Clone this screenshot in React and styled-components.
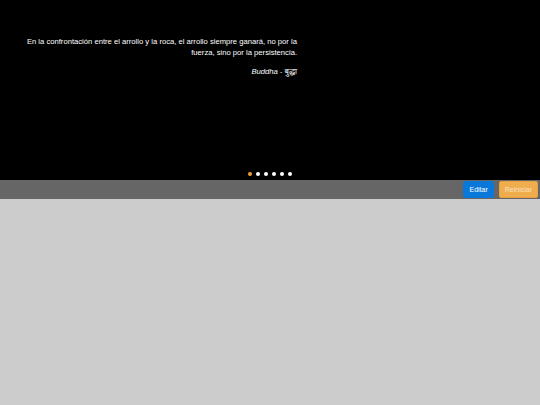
import React from 'react';
import styled, { createGlobalStyle } from 'styled-components';

const GlobalStyle = createGlobalStyle`
  html, body {
    margin: 0;
    padding: 0;
    height: 100%;
    background: #cccccc;
    font-family: "Liberation Sans", Arial, "Noto Sans", sans-serif;
  }
  #root {
    min-height: 100%;
  }
`;

const Page = styled.div`
  width: 540px;
  height: 405px;
  display: flex;
  flex-direction: column;
  background: #cccccc;
`;

const Stage = styled.div`
  height: 180px;
  background: #000;
  display: flex;
  flex-direction: column;
  justify-content: space-between;
  box-sizing: border-box;
  padding: 36px 0 4px 0;
`;

const Quote = styled.blockquote`
  margin: 0;
  width: 297px;
  box-sizing: border-box;
  padding-left: 20px;
  text-align: right;
  color: #fff;
  font-size: 7.65px;
  line-height: 11px;
`;

const Author = styled.p`
  margin: 8px 0 0 0;
  font-style: italic;
`;

const Dots = styled.div`
  display: flex;
  justify-content: center;
  gap: 3.5px;
  margin-left: 230px;
  width: 80px;
`;

const Dot = styled.span`
  width: 4.5px;
  height: 4.5px;
  border-radius: 50%;
  background: ${p => (p.$active ? '#f0a030' : '#ffffff')};
`;

const Toolbar = styled.div`
  height: 19px;
  background: #666666;
  display: flex;
  justify-content: flex-end;
  align-items: center;
  gap: 5px;
  padding-right: 2px;
`;

const Button = styled.button`
  height: 17px;
  border: 1px solid ${p => (p.$variant === 'warn' ? '#e8a040' : '#0a78d8')};
  border-radius: 2px;
  background: ${p => (p.$variant === 'warn' ? '#f0ad4e' : '#0a78d8')};
  color: ${p => (p.$variant === 'warn' ? '#fbe3c0' : '#ffffff')};
  font-family: inherit;
  font-size: 7px;
  padding: 0 5px;
  cursor: pointer;
`;

export default function App() {
  return (
    <>
      <GlobalStyle />
      <Page>
        <Stage>
          <Quote>
            En la confrontación entre el arrollo y la roca, el arrollo siempre ganará, no por la fuerza, sino por la persistencia.
            <Author>Buddha - बुद्धा</Author>
          </Quote>
          <Dots>
            {[0, 1, 2, 3, 4, 5].map(i => (
              <Dot key={i} $active={i === 0} />
            ))}
          </Dots>
        </Stage>
        <Toolbar>
          <Button>Editar</Button>
          <Button $variant="warn">Reiniciar</Button>
        </Toolbar>
      </Page>
    </>
  );
}
